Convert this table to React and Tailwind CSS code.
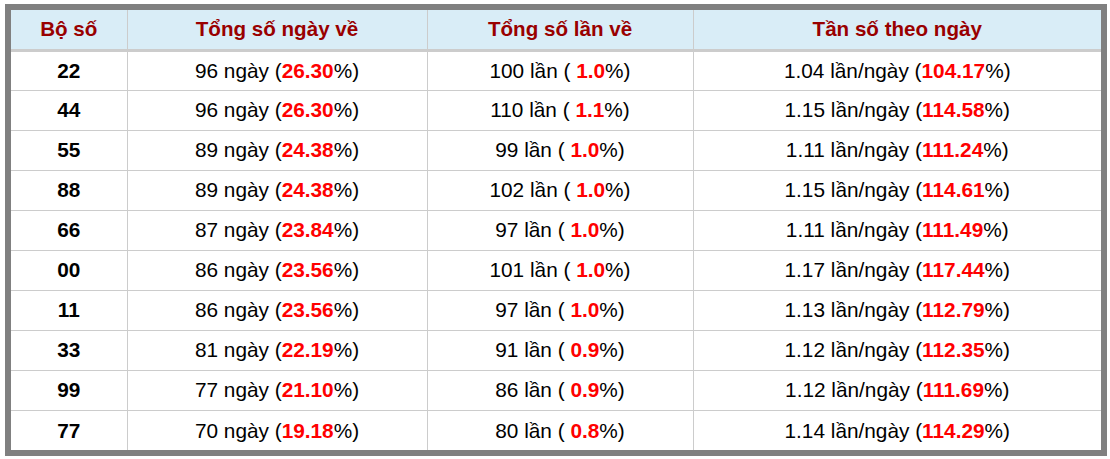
const rows = [
  ["22", "96", "26.30", "100", "1.0", "1.04", "104.17"],
  ["44", "96", "26.30", "110", "1.1", "1.15", "114.58"],
  ["55", "89", "24.38", "99", "1.0", "1.11", "111.24"],
  ["88", "89", "24.38", "102", "1.0", "1.15", "114.61"],
  ["66", "87", "23.84", "97", "1.0", "1.11", "111.49"],
  ["00", "86", "23.56", "101", "1.0", "1.17", "117.44"],
  ["11", "86", "23.56", "97", "1.0", "1.13", "112.79"],
  ["33", "81", "22.19", "91", "0.9", "1.12", "112.35"],
  ["99", "77", "21.10", "86", "0.9", "1.12", "111.69"],
  ["77", "70", "19.18", "80", "0.8", "1.14", "114.29"],
];

export default function App() {
  return (
    <div className="w-[1110px] h-[459px] bg-white pt-[4px] pl-[5px]" style={{ fontFamily: '"Liberation Sans", Arial, sans-serif' }}>
      <div className="w-[1102px] border-[6px] border-[#808080] bg-white">
        <table className="w-[1090px] table-fixed border-collapse text-[20.8px] text-black">
          <colgroup>
            <col className="w-[116px]" />
            <col className="w-[300px]" />
            <col className="w-[266px]" />
            <col className="w-[408px]" />
          </colgroup>
          <thead>
            <tr className="h-[40px] bg-[#d9edf7] text-[#990000] font-bold text-[20.6px]">
              <th className="border-r border-b-[3px] border-[#cccccc] font-bold text-center p-0">Bộ số</th>
              <th className="border-r border-b-[3px] border-[#cccccc] font-bold text-center p-0">Tổng số ngày về</th>
              <th className="border-r border-b-[3px] border-[#cccccc] font-bold text-center p-0">Tổng số lần về</th>
              <th className="border-b-[3px] border-[#cccccc] font-bold text-center p-0">Tần số theo ngày</th>
            </tr>
          </thead>
          <tbody>
            {rows.map((r, i) => (
              <tr key={r[0]} className={i < rows.length - 1 ? "h-[40px] border-b border-[#cccccc]" : "h-[40px]"}>
                <td className="border-r border-[#cccccc] text-center font-bold p-0">{r[0]}</td>
                <td className="border-r border-[#cccccc] text-center p-0">
                  {r[1]} ngày (<span className="font-bold text-[#ff0000]">{r[2]}</span>%)
                </td>
                <td className="border-r border-[#cccccc] text-center p-0">
                  {r[3]} lần ( <span className="font-bold text-[#ff0000]">{r[4]}</span>%)
                </td>
                <td className="text-center p-0">
                  {r[5]} lần/ngày (<span className="font-bold text-[#ff0000]">{r[6]}</span>%)
                </td>
              </tr>
            ))}
          </tbody>
        </table>
      </div>
    </div>
  );
}
